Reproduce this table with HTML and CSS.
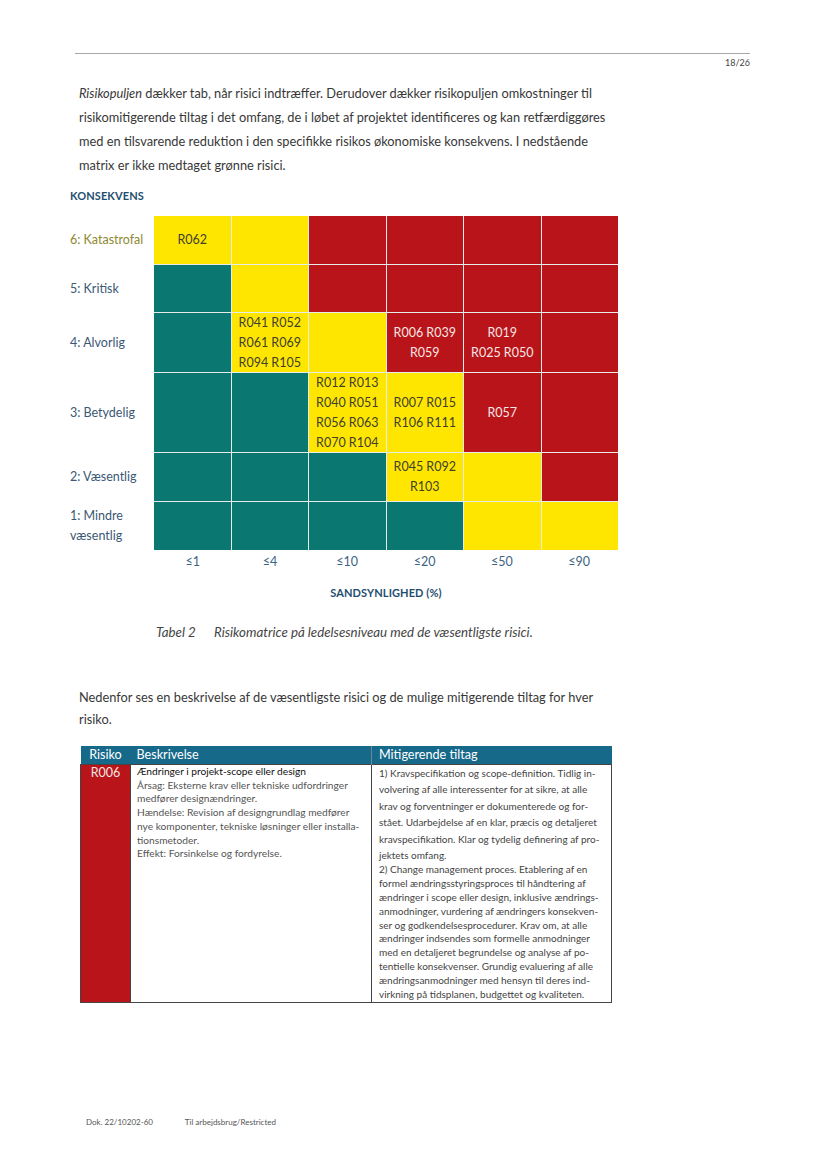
FILE: index.html
```html
<!DOCTYPE html>
<html lang="da">
<head>
<meta charset="utf-8">
<title>Risikomatrice</title>
<link rel="stylesheet" href="styles.css">
</head>
<body>
<div class="page">
  <header class="page-head">
    <div class="rule"></div>
    <div class="pagenum">18/26</div>
  </header>

  <p class="para intro"><em>Risikopuljen</em> dækker tab, når risici indtræffer. Derudover dækker risikopuljen omkostninger til<br>risikomitigerende tiltag i det omfang, de i løbet af projektet identificeres og kan retfærdiggøres<br>med en tilsvarende reduktion i den specifikke risikos økonomiske konsekvens. I nedstående<br>matrix er ikke medtaget grønne risici.</p>

  <div class="axis-title y-title">KONSEKVENS</div>

  <div class="matrix-wrap">
    <div class="row-labels">
      <div class="rl cat">6: Katastrofal</div>
      <div class="rl">5: Kritisk</div>
      <div class="rl">4: Alvorlig</div>
      <div class="rl">3: Betydelig</div>
      <div class="rl">2: Væsentlig</div>
      <div class="rl">1: Mindre<br>væsentlig</div>
    </div>
    <div class="matrix">
      <div class="c y">R062</div><div class="c y"></div><div class="c r"></div><div class="c r"></div><div class="c r"></div><div class="c r"></div>
      <div class="c t"></div><div class="c y"></div><div class="c r"></div><div class="c r"></div><div class="c r"></div><div class="c r"></div>
      <div class="c t"></div><div class="c y">R041 R052<br>R061 R069<br>R094 R105</div><div class="c y"></div><div class="c r">R006 R039<br>R059</div><div class="c r">R019<br>R025 R050</div><div class="c r"></div>
      <div class="c t"></div><div class="c t"></div><div class="c y">R012 R013<br>R040 R051<br>R056 R063<br>R070 R104</div><div class="c y">R007 R015<br>R106 R111</div><div class="c r">R057</div><div class="c r"></div>
      <div class="c t"></div><div class="c t"></div><div class="c t"></div><div class="c y">R045 R092<br>R103</div><div class="c y"></div><div class="c r"></div>
      <div class="c t"></div><div class="c t"></div><div class="c t"></div><div class="c t"></div><div class="c y"></div><div class="c y"></div>
    </div>
  </div>

  <div class="x-labels">
    <span>≤1</span><span>≤4</span><span>≤10</span><span>≤20</span><span>≤50</span><span>≤90</span>
  </div>
  <div class="axis-title x-title">SANDSYNLIGHED (%)</div>

  <p class="caption"><span class="cap-num">Tabel 2</span><span>Risikomatrice på ledelsesniveau med de væsentligste risici.</span></p>

  <p class="para second">Nedenfor ses en beskrivelse af de væsentligste risici og de mulige mitigerende tiltag for hver<br>risiko.</p>

  <table class="risk-table">
    <thead>
      <tr><th class="col-id">Risiko</th><th class="col-desc">Beskrivelse</th><th class="col-mit">Mitigerende tiltag</th></tr>
    </thead>
    <tbody>
      <tr>
        <td class="col-id">R006</td>
        <td class="col-desc">
          <div class="desc-title">Ændringer i projekt-scope eller design</div>
          <div>Årsag: Eksterne krav eller tekniske udfordringer<br>medfører designændringer.</div>
          <div>Hændelse: Revision af designgrundlag medfører<br>nye komponenter, tekniske løsninger eller installa-<br>tionsmetoder.</div>
          <div>Effekt: Forsinkelse og fordyrelse.</div>
        </td>
        <td class="col-mit">
          <div class="mit1">1) Kravspecifikation og scope-definition. Tidlig in-<br>volvering af alle interessenter for at sikre, at alle<br>krav og forventninger er dokumenterede og for-<br>stået. Udarbejdelse af en klar, præcis og detaljeret<br>kravspecifikation. Klar og tydelig definering af pro-<br>jektets omfang.</div>
          <div class="mit2">2) Change management proces. Etablering af en<br>formel ændringsstyringsproces til håndtering af<br>ændringer i scope eller design, inklusive ændrings-<br>anmodninger, vurdering af ændringers konsekven-<br>ser og godkendelsesprocedurer. Krav om, at alle<br>ændringer indsendes som formelle anmodninger<br>med en detaljeret begrundelse og analyse af po-<br>tentielle konsekvenser. Grundig evaluering af alle<br>ændringsanmodninger med hensyn til deres ind-<br>virkning på tidsplanen, budgettet og kvaliteten.</div>
        </td>
      </tr>
    </tbody>
  </table>

  <footer class="page-foot">
    <span class="doc">Dok. 22/10202-60</span>
    <span>Til arbejdsbrug/Restricted</span>
  </footer>
</div>
</body>
</html>
```

FILE: styles.css
```css
* { box-sizing: border-box; }
html, body { margin: 0; padding: 0; background: #fff; }
body { font-family: "Lato", "Liberation Sans", sans-serif; color: #333; }

.page {
  width: 827px;
  height: 1169px;
  display: flex;
  flex-direction: column;
}

.page-head { padding: 53px 77px 0 75px; }
.rule { border-top: 1px solid #a8a8a8; height: 0; }
.pagenum { text-align: right; font-size: 9px; color: #444; margin-top: 3px; line-height: 11px; }

.para {
  margin: 0;
  padding-left: 79px;
  font-size: 12.8px;
  line-height: 24px;
  color: #383838;
}
.intro { margin-top: 13px; }
.intro em { font-style: italic; }

.axis-title {
  color: #1f4e6f;
  font-size: 11px;
  font-weight: 700;
  letter-spacing: 0.1px;
}
.y-title { padding-left: 70px; margin-top: 11px; line-height: 16px; }

.matrix-wrap {
  display: flex;
  margin-top: 12px;
  padding-left: 70px;
}
.row-labels {
  width: 84px;
  display: grid;
  grid-template-rows: 48px 47px 59px 79px 48px 48px;
  row-gap: 1px;
}
.rl {
  display: flex;
  align-items: center;
  font-size: 12.5px;
  line-height: 20px;
  color: #3b5875;
}
.rl.cat { color: #8f8833; }

.matrix {
  display: grid;
  grid-template-columns: repeat(6, 76.5px);
  grid-template-rows: 48px 47px 59px 79px 48px 48px;
  gap: 1px;
  background: #e6ecea;
}
.c {
  display: flex;
  align-items: center;
  justify-content: center;
  text-align: center;
  font-size: 12.5px;
  line-height: 20px;
}
.c.y { background: #ffe600; color: #403f2e; }
.c.r { background: #b8141a; color: #f6e6e4; }
.c.t { background: #0b7771; }

.x-labels {
  display: grid;
  grid-template-columns: repeat(6, 77.3px);
  padding-left: 154px;
  margin-top: 3px;
  font-size: 12.5px;
  line-height: 18px;
  color: #3d6482;
  text-align: center;
}
.x-title { text-align: center; margin-left: 154px; width: 464px; margin-top: 14px; line-height: 16px; }

.caption {
  margin: 23px 0 0 156px;
  font-size: 13.3px;
  font-style: italic;
  color: #444;
  line-height: 16px;
  display: flex;
}
.cap-num { width: 58px; }

.second { margin-top: 46px; line-height: 22px; }

.risk-table {
  margin: 16px 0 0 80px;
  width: 532px;
  border-collapse: collapse;
  table-layout: fixed;
}
.risk-table th {
  background: #17698a;
  color: #fff;
  font-weight: 400;
  font-size: 12.6px;
  line-height: 18px;
  height: 18px;
  padding: 0 6px;
  text-align: left;
}
.risk-table th.col-id { text-align: center; padding: 0; }
.risk-table th.col-mit { padding-left: 7px; border-left: 1px solid #6b8a99; }
.col-id { width: 50px; }
.col-desc { width: 241px; }
.risk-table td {
  vertical-align: top;
  border: 1px solid #444;
  padding: 0 6px 1px;
  font-size: 10.2px;
  color: #555;
}
.risk-table td.col-id {
  background: #b8141a;
  color: #f6e6e4;
  text-align: center;
  font-size: 12.5px;
  line-height: 16px;
  padding: 0;
}
.col-desc { line-height: 13.7px; }
.desc-title { color: #111; }
.risk-table td.col-mit { padding-left: 7px; font-size: 10px; color: #444; }
.mit1 { line-height: 16.4px; }
.mit2 { line-height: 13.8px; }

.page-foot {
  margin-top: auto;
  padding: 0 0 42px 86px;
  font-size: 8px;
  color: #555;
  line-height: 10px;
}
.page-foot .doc { display: inline-block; width: 97px; }
```
